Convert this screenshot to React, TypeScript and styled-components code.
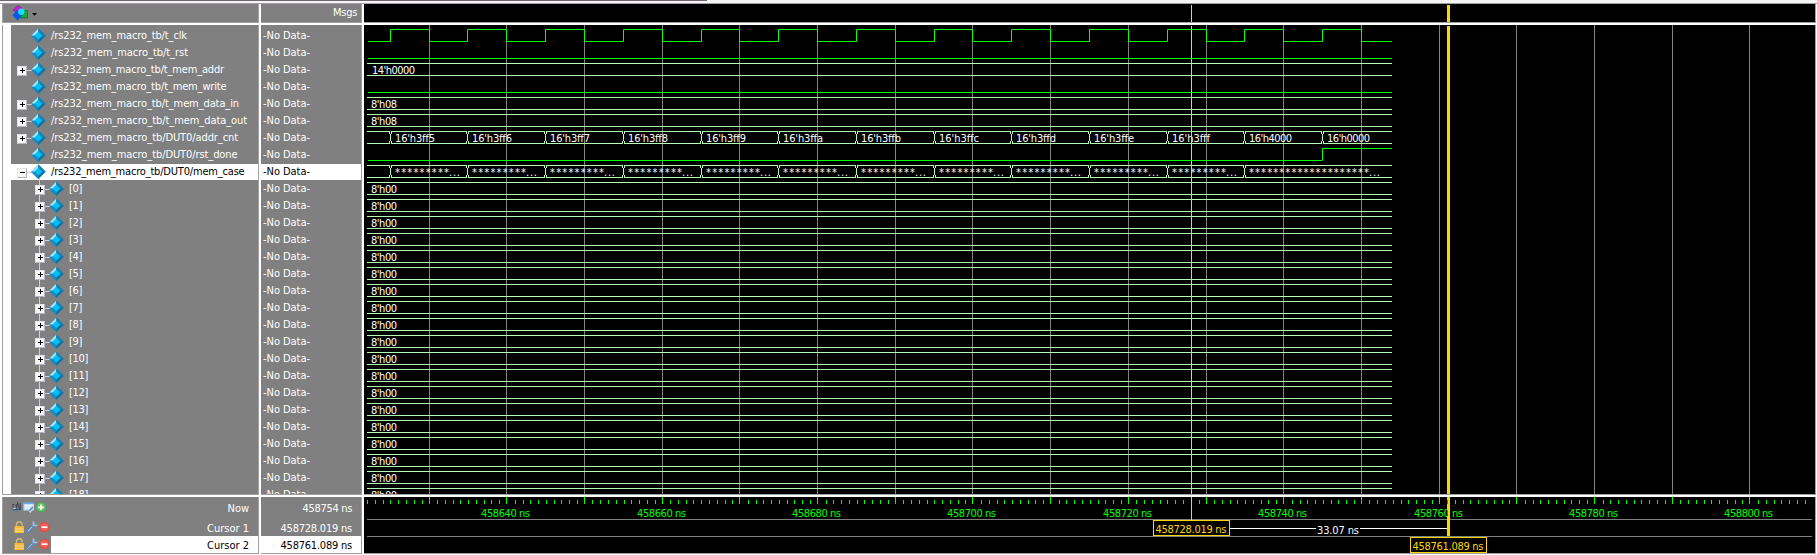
import React, { useLayoutEffect, useRef } from 'react';
import styled, { createGlobalStyle } from 'styled-components';

const FONT = "'DejaVu Sans Condensed', 'DejaVu Sans', sans-serif";
const GRAY = '#808080';
const EDGE = '#a0a0a0';
const GREEN = '#00ff00';
const BUS = '#b4ffb4';
const GOLD = '#ffd700';

const Global = createGlobalStyle`
  body { margin: 0; background: #fff; overflow: hidden; }
`;

const Window = styled.div`
  width: 1817px;
  height: 555px;
  box-sizing: border-box;
  background: #fff;
  font-family: ${FONT};
  font-stretch: condensed;
  font-size: 11px;
  line-height: 16px;
  color: #fff;
`;

const TopEdge = styled.div`
  height: 4px;
  box-sizing: border-box;
  border-bottom: 1px solid ${EDGE};
  background: #f6f3f6;
`;
const TopEdgeDark = styled.div`
  width: 707px;
  height: 1px;
  background: #6c676c;
`;

const Panes = styled.div`
  display: grid;
  grid-template-columns: 257px 101px 1452px;
  grid-template-rows: 19px 470px 57px;
  gap: 2px;
  padding-left: 2px;
`;

const Pane = styled.div<{ $dark?: boolean; $first?: boolean }>`
  box-sizing: border-box;
  overflow: hidden;
  background: ${(p) => (p.$dark ? '#000' : GRAY)};
  border-right: 1px solid ${EDGE};
  border-bottom: 1px solid ${EDGE};
  border-left: ${(p) => (p.$first ? `1px solid ${EDGE}` : 'none')};
  min-width: 0;
`;

const HeaderTools = styled.div`
  display: flex;
  align-items: center;
  height: 18px;
  padding-left: 9px;
  gap: 4px;
`;
const HeaderTitle = styled.div`
  padding: 1px 4px 0 0;
  text-align: right;
`;

const Tree = styled.div`
  border-left: 8px solid #fff;
  padding-top: 3px;
  height: 469px;
  box-sizing: border-box;
`;
const TreeRow = styled.div<{ $selected?: boolean; $child?: boolean }>`
  display: flex;
  height: 17px;
  padding-left: ${(p) => (p.$child ? 23 : 5)}px;
  background: ${(p) => (p.$selected ? 'linear-gradient(#fff 16px, transparent 16px)' : 'none')};
  color: ${(p) => (p.$selected ? '#000' : '#fff')};
  white-space: nowrap;
`;
const SignalName = styled.div`
  padding-left: 5px;
`;
const Values = styled.div`
  padding-top: 3px;
`;
const ValueRow = styled.div<{ $selected?: boolean }>`
  height: 17px;
  padding-left: 2px;
  background: ${(p) => (p.$selected ? 'linear-gradient(#fff 16px, transparent 16px)' : 'none')};
  color: ${(p) => (p.$selected ? '#000' : '#fff')};
`;

const FooterRow = styled.div<{ $top?: boolean }>`
  display: flex;
  height: ${(p) => (p.$top ? 22 : 17)}px;
`;
const FooterIcons = styled.div<{ $indent: number; $drop?: number }>`
  width: ${(p) => 48 - p.$indent}px;
  padding: ${(p) => p.$drop ?? 0}px 0 0 ${(p) => p.$indent}px;
  flex: none;
`;
const FooterText = styled.div<{ $selected?: boolean; $top?: boolean }>`
  flex: 1;
  box-sizing: border-box;
  height: ${(p) => (p.$top ? 22 : 17)}px;
  text-align: right;
  padding: ${(p) => (p.$top ? 4 : 2)}px 9px 0 0;
  background: ${(p) => (p.$selected ? '#fff' : 'none')};
  color: ${(p) => (p.$selected ? '#000' : '#fff')};
`;

const Drawing = styled.svg`
  display: block;
  flex: none;
  font-family: ${FONT};
  font-stretch: condensed;
  font-size: 11px;
`;

const FitSpan = styled.span`
  display: inline-block;
  white-space: nowrap;
`;

/* Tightens or widens the tracking so that the text takes the given width. */
const Fit = ({ width, children }: { width: number; children: string }) => {
  const ref = useRef<HTMLSpanElement>(null);
  useLayoutEffect(() => {
    const el = ref.current;
    if (!el) return;
    el.style.letterSpacing = '0px';
    const natural = el.getBoundingClientRect().width;
    el.style.letterSpacing = `${(width - natural) / children.length}px`;
  }, [width, children]);
  return <FitSpan ref={ref}>{children}</FitSpan>;
};

const Gem = ({ x }: { x: number }) => (
  <g transform={`translate(${x} 0.5)`}>
    <path d="M7.3 0 L14.6 7.2 L7.3 14.4 L0 7.2Z" fill="#0872a8" />
    <path d="M7.3 0 L0 7.2 L3.6 7.2 L7.3 3.5Z" fill="#a8e6f8" />
    <path d="M7.3 0 L14.6 7.2 L11 7.2 L7.3 3.5Z" fill="#1482b4" />
    <path d="M0 7.2 L3.6 7.2 L7.3 10.9 L7.3 14.4Z" fill="#168cc4" />
    <path d="M7.3 3.3 L11.2 7.2 L7.3 11.1 L3.4 7.2Z" fill="#00c0f8" />
  </g>
);

type Expand = 'plus' | 'minus' | 'none';
const Branch = ({ expand, child }: { expand: Expand; child?: boolean }) => (
  <Drawing width={30} height={17}>
    {child && <path d="M5.5 0V17" stroke="#d0d0d0" />}
    {expand === 'minus' && <path d="M23.5 14V17" stroke="#d0d0d0" />}
    {expand !== 'none' && (
      <>
        <path d="M11 8.5H16" stroke="#d0d0d0" />
        <rect x="1.5" y="4.5" width="9" height="9" fill="#f8f8f8" stroke="#e4e4ec" />
        <path d="M1.5 13.5H10.5V4.5" fill="none" stroke="#b4b4c4" />
        <path d={expand === 'plus' ? 'M4 8.5H9M6.5 6V11' : 'M4 8.5H9'} stroke="#000" />
      </>
    )}
    <Gem x={15.1} />
  </Drawing>
);

const TB = '/rs232_mem_macro_tb/';
const signals: { name: string; width: number; expand: Expand; child?: boolean }[] = [
  { name: TB + 't_clk', width: 136, expand: 'none' },
  { name: TB + 't_rst', width: 137, expand: 'none' },
  { name: TB + 't_mem_addr', width: 173, expand: 'plus' },
  { name: TB + 't_mem_write', width: 175.5, expand: 'none' },
  { name: TB + 't_mem_data_in', width: 188, expand: 'plus' },
  { name: TB + 't_mem_data_out', width: 196, expand: 'plus' },
  { name: TB + 'DUT0/addr_cnt', width: 187, expand: 'plus' },
  { name: TB + 'DUT0/rst_done', width: 186.5, expand: 'none' },
  { name: TB + 'DUT0/mem_case', width: 193.5, expand: 'minus' },
  ...Array.from({ length: 19 }, (_, i) => ({
    name: `[${i}]`,
    width: i < 10 ? 13 : 19,
    expand: 'plus' as Expand,
    child: true,
  })),
];
const SELECTED = 8;

/* Time axis: chart x of a moment given in ns after 458000. */
const SCALE = 7.77;
const at = (ns: number) => Math.floor(65 + (ns - 630) * SCALE + 0.05);
const START = 3;
const END = 1028;
const rowTop = (row: number) => 3 + row * 17;
const every = (from: number, to: number, step: number) => {
  const out: number[] = [];
  for (let t = from; t <= to; t += step) out.push(t);
  return out;
};

const clockPath = () => {
  const hi = rowTop(0) + 1.5;
  const lo = rowTop(0) + 13.5;
  let d = `M4 ${lo}`;
  every(625, 745, 10).forEach((t) => {
    d += `H${at(t) + 0.5}V${hi}H${at(t + 5) + 0.5}V${lo}`;
  });
  return d + `H${END}`;
};

const Bus = ({ row, edges = [] }: { row: number; edges?: number[] }) => {
  const t = rowTop(row) + 1.5;
  const b = t + 12;
  const stops = [START, ...edges.map(at), END];
  return (
    <g stroke={BUS} fill="none">
      {stops.slice(0, -1).map((s, i) => {
        const a = i === 0 ? s : s + 1;
        return <path key={s} d={`M${a} ${t}H${stops[i + 1]}M${a} ${b}H${stops[i + 1]}`} />;
      })}
      {edges.map((n) => {
        const x = at(n) + 0.5;
        return (
          <path
            key={n}
            d={`M${x - 1} ${t}v2.5M${x + 1} ${t}v2.5M${x} ${t + 2.5}v7M${x - 1} ${b}v-2.5M${x + 1} ${b}v-2.5`}
          />
        );
      })}
    </g>
  );
};

const Value = ({ x, row, text, width }: { x: number; row: number; text: string; width: number }) => (
  <text x={x} y={rowTop(row) + 12} textLength={width} fill="#fff">{text}</text>
);

const Stars = ({ x, count }: { x: number; count: number }) => (
  <>
    <text x={x} y={rowTop(8) + 12} textLength={count * 6} fill="#fff">{'*'.repeat(count)}</text>
    <text x={x + count * 6} y={rowTop(8) + 12} textLength={11} fill="#fff">...</text>
  </>
);

const counts = ['3ff5', '3ff6', '3ff7', '3ff8', '3ff9', '3ffa', '3ffb', '3ffc', '3ffd', '3ffe', '3fff', '4000', '0000'];
const countWidth = (v: string) => (v === '3fff' ? 38 : v.startsWith('3ff') ? 40 : 43);

const Waves = () => (
  <Drawing width={1451} height={469}>
    {every(630, 800, 10).map((t) => (
      <rect key={t} x={at(t)} y={0} width={1} height={469} fill={GRAY} />
    ))}
    <g stroke={GREEN} fill="none">
      <path d={clockPath()} />
      <path d={`M4 ${rowTop(1) + 13.5}H${END}`} />
      <path d={`M4 ${rowTop(3) + 13.5}H${END}`} />
      <path d={`M4 ${rowTop(7) + 13.5}H${at(745) + 0.5}v-12H${END}`} />
    </g>
    <Bus row={2} />
    <Bus row={4} />
    <Bus row={5} />
    <Bus row={6} edges={every(625, 745, 10)} />
    <Bus row={8} edges={every(625, 735, 10)} />
    <Value x={8} row={2} text="14'h0000" width={43} />
    <Value x={7} row={4} text="8'h08" width={26} />
    <Value x={7} row={5} text="8'h08" width={26} />
    {counts.map((v, i) => (
      <Value key={v} x={at(625 + i * 10) + 5} row={6} text={`16'h${v}`} width={countWidth(v)} />
    ))}
    {counts.slice(0, 12).map((v, i) => (
      <Stars key={v} x={at(625 + i * 10) + 5} count={i === 11 ? 20 : 9} />
    ))}
    {Array.from({ length: 19 }, (_, i) => (
      <g key={i}>
        <Bus row={9 + i} />
        <Value x={7} row={9 + i} text="8'h00" width={26} />
      </g>
    ))}
    <rect x={827} y={1} width={1} height={468} fill={GOLD} />
    <rect x={1083} y={1} width={3} height={468} fill={GOLD} />
  </Drawing>
);

const Ruler = () => (
  <Drawing width={1451} height={56}>
    {every(622, 807, 1).map((t) =>
      t % 10 === 0 ? (
        <rect key={t} x={at(t)} y={0} width={1} height={7} fill={GREEN} />
      ) : (
        <rect key={t} x={Math.round(65.3 + (t - 630) * SCALE)} y={3} width={1} height={4} fill={GREEN} />
      ),
    )}
    {every(640, 800, 20).map((t) => (
      <text key={t} x={at(t) - 25} y={20} textLength={49} fill={GREEN}>{`458${t} ns`}</text>
    ))}
    <path d="M3 22.5H1448M3 39.5H1448" stroke={GRAY} />
    <rect x={827} y={0} width={1} height={23} fill={GOLD} />
    <rect x={1083} y={0} width={3} height={39} fill={GOLD} />
    <path d="M1083.5 3v4M1083.5 13v6" stroke="#ff2800" />
    <path d="M866 31.5H952M996 31.5H1083" stroke="#fff" />
    <text x={953} y={37} textLength={42} fill="#fff">33.07 ns</text>
    <rect x={789.5} y={23.5} width={76} height={15} fill="#000" stroke={GOLD} />
    <text x={791.5} y={36} textLength={71} fill={GOLD}>458728.019 ns</text>
    <rect x={1046.5} y={40.5} width={76} height={15} fill="#000" stroke={GOLD} />
    <text x={1048.5} y={53} textLength={71} fill={GOLD}>458761.089 ns</text>
  </Drawing>
);

const HeaderCursors = () => (
  <Drawing width={1451} height={18}>
    <rect x={827} y={1} width={1} height={17} fill={GOLD} />
    <rect x={1083} y={1} width={3} height={17} fill={GOLD} />
  </Drawing>
);

const ObjectsIcon = () => (
  <Drawing width={16} height={16}>
    <path d="M8.5 5.5H15.5V13H8.5Z" fill="#18a838" stroke="#087028" strokeWidth=".7" />
    <path d="M1 5 L6 .6 L10 3 L5 8Z" fill="#c020d0" stroke="#801090" strokeWidth=".6" />
    <path d="M5.5 5 L10.5 10.2 L5.5 15.5 L.3 10.2Z" fill="#0858e8" />
    <circle cx="9.3" cy="6.8" r="3.2" fill="#18e0f8" />
  </Drawing>
);
const DropArrow = () => (
  <Drawing width={6} height={6}>
    <path d="M0 3H5L2.5 5.8Z" fill="#000" />
  </Drawing>
);

const Badge = ({ x, y, kind }: { x: number; y: number; kind: 'add' | 'remove' }) => (
  <g transform={`translate(${x} ${y})`}>
    <circle r="5.1" fill={kind === 'add' ? '#4cb050' : '#e04a42'} />
    <circle r="4" cy="-.3" fill={kind === 'add' ? '#66c066' : '#ee6058'} />
    <path d={kind === 'add' ? 'M-2.8 0H2.8M0 -2.8V2.8' : 'M-3 0H3'} stroke="#fff" strokeWidth="1.7" />
  </g>
);
const NowIcons = () => (
  <Drawing width={40} height={17}>
    <path d="M.5 10.5H9" stroke="#285888" strokeWidth="1.4" />
    <path d="M1 9V5.5H2.5M4 10L5.7 4L7.6 10M3.5 7L5 5.5M8.3 4V10" stroke="#484c58" fill="none" strokeWidth="1.1" />
    <path d="M1 9.5H4" stroke="#b8c8dc" />
    <path d="M11.5 3.5H22V11.5H20L18.5 14L16 11.5H11.5Z" fill="#c2dcf4" />
    <path d="M11.5 4H22" stroke="#5c9cdc" strokeWidth="1.6" />
    <path d="M13 6.8H20M13 9H18" stroke="#fff" />
    <path d="M17 12L21 8" stroke="#688cb4" strokeWidth="1.5" />
    <Badge x={29} y={8.3} kind="add" />
  </Drawing>
);
const CursorIcons = () => (
  <Drawing width={37} height={17}>
    <path d="M2.5 8V5.5Q2.5 2.8 5.2 2.8T8 5.5V6.4" fill="none" stroke="#d0b878" strokeWidth="1.4" />
    <rect x=".5" y="7" width="9.5" height="7" rx=".6" fill="#f0b83c" />
    <path d="M1 10H9.5M1 12.3H9.5" stroke="#ffdc7c" />
    <path d="M14 13L20 6" stroke="#5888cc" strokeWidth="2.6" strokeLinecap="round" />
    <path d="M13.8 12.5L18 8" stroke="#a8ccf4" />
    <path d="M19.5 2.5V6.5H23.5" fill="none" stroke="#a4bce0" strokeWidth="1.7" />
    <Badge x={30.4} y={8.2} kind="remove" />
  </Drawing>
);

export default function App() {
  return (
    <Window>
      <Global />
      <TopEdge>
        <TopEdgeDark />
      </TopEdge>
      <Panes>
        <Pane $first>
          <HeaderTools>
            <ObjectsIcon />
            <DropArrow />
          </HeaderTools>
        </Pane>
        <Pane>
          <HeaderTitle>
            <Fit width={24}>Msgs</Fit>
          </HeaderTitle>
        </Pane>
        <Pane $dark>
          <HeaderCursors />
        </Pane>

        <Pane $first>
          <Tree>
            {signals.map((s, i) => (
              <TreeRow key={s.name} $selected={i === SELECTED} $child={s.child}>
                <Branch expand={s.expand} child={s.child} />
                <SignalName>
                  <Fit width={s.width}>{s.name}</Fit>
                </SignalName>
              </TreeRow>
            ))}
          </Tree>
        </Pane>
        <Pane>
          <Values>
            {signals.map((s, i) => (
              <ValueRow key={s.name} $selected={i === SELECTED}>
                <Fit width={47}>-No Data-</Fit>
              </ValueRow>
            ))}
          </Values>
        </Pane>
        <Pane $dark>
          <Waves />
        </Pane>

        <Pane $first>
          <FooterRow $top>
            <FooterIcons $indent={9} $drop={2}><NowIcons /></FooterIcons>
            <FooterText $top><Fit width={21.5}>Now</Fit></FooterText>
          </FooterRow>
          <FooterRow>
            <FooterIcons $indent={11}><CursorIcons /></FooterIcons>
            <FooterText><Fit width={42}>Cursor 1</Fit></FooterText>
          </FooterRow>
          <FooterRow>
            <FooterIcons $indent={11}><CursorIcons /></FooterIcons>
            <FooterText $selected><Fit width={42}>Cursor 2</Fit></FooterText>
          </FooterRow>
        </Pane>
        <Pane>
          <FooterRow $top>
            <FooterText $top><Fit width={49.5}>458754 ns</Fit></FooterText>
          </FooterRow>
          <FooterRow>
            <FooterText><Fit width={71.5}>458728.019 ns</Fit></FooterText>
          </FooterRow>
          <FooterRow>
            <FooterText $selected><Fit width={71.5}>458761.089 ns</Fit></FooterText>
          </FooterRow>
        </Pane>
        <Pane $dark>
          <Ruler />
        </Pane>
      </Panes>
    </Window>
  );
}
